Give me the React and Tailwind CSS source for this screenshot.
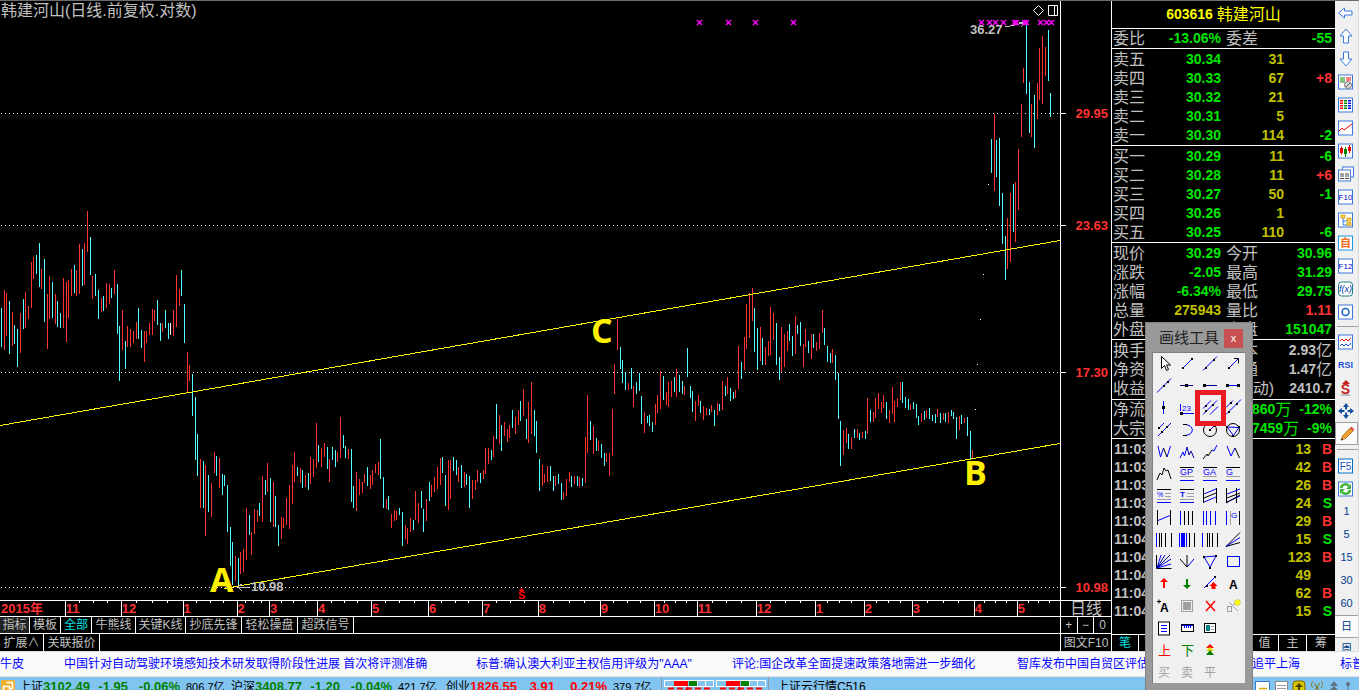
import { useState } from 'react';

const RED = '#ff3232';
const CYAN = '#54ffff';
const BLUE = '#0000ff';

// one bar per day: colour (r/c/w), x, high, low
const BARS = `c1,308,347 r4,290,350 r6,293,336 c9,301,354 r12,312,346 c14,325,344 c17,329,367 r20,313,353 c23,299,329 r25,292,328
r28,306,319 r31,262,308 r33,257,279 c36,255,274 c39,243,287 r41,269,289 c44,259,322 r47,294,349 r49,276,319 c52,282,318
r55,294,324 c57,301,327 c60,313,328 r63,278,328 r66,282,342 r68,280,318 r71,269,296 c74,265,293 r76,270,296 r79,244,294
c82,249,286 r84,243,285 r87,211,252 c90,237,275 r92,276,299 c95,274,296 c98,290,319 r101,298,312 c103,296,311 r106,283,308
r109,284,304 c111,288,298 r114,270,294 c117,284,334 c119,326,381 r122,310,350 c125,341,369 r127,326,347 r130,329,347 r133,331,343
r136,322,339 c138,308,339 c141,330,348 r144,331,362 r146,331,343 r149,323,335 r152,309,335 r154,310,321 c157,300,325 c160,323,341
r162,323,332 c165,310,328 c168,323,339 w170,323,335 r173,310,336 r176,275,327 r179,289,306 c181,270,296 c184,304,343 r187,352,392
r189,365,381 c192,374,416 c195,397,460 c197,434,476 r200,459,508 c203,461,508 r205,465,536 c208,475,512 r211,483,517 r214,452,473
c216,456,476 r219,458,488 c222,474,495 c224,475,486 c227,485,532 c230,527,566 c232,542,585 r235,556,581 c238,558,587 r240,552,574
r243,549,572 r246,508,560 c249,515,535 r251,532,555 r254,509,534 r257,510,522 c259,503,516 r262,476,522 c265,480,495 r267,463,492
c270,478,522 r273,482,527 c275,496,527 c278,525,546 r281,517,539 r283,518,528 r286,498,525 r289,485,529 r292,465,504 r294,452,482
c297,467,476 r300,468,483 c302,470,488 r305,475,487 c308,473,490 r310,457,484 r313,459,477 r316,423,468 c318,445,462 r321,448,467
r324,443,457 c327,447,469 r329,459,482 c332,447,460 c335,450,467 r337,452,462 r340,417,458 c343,435,448 c345,446,458 r348,449,459
c351,449,502 c353,486,508 r356,472,511 r359,479,495 r362,482,493 r364,474,483 c367,467,486 r370,475,489 r372,470,485 r375,464,473
r378,462,475 c380,439,479 c383,477,508 r386,499,509 c388,496,510 r391,514,528 r394,510,521 r396,511,520 c399,508,515 c402,512,546
r405,525,539 r407,528,544 r410,518,532 c413,520,530 r415,491,520 r418,503,523 c421,491,508 c423,509,532 r426,499,521 c429,482,501
r431,485,497 r434,477,492 r437,467,489 r440,458,485 c442,457,473 c445,475,506 r448,460,510 r450,460,499 c453,457,471 c456,460,475
r458,467,482 c461,465,488 r464,472,487 c466,474,485 c469,476,508 r472,480,499 r475,480,490 r477,470,482 c480,473,483 r483,470,479
r485,448,474 r488,448,464 c491,450,460 r493,436,457 c496,404,439 r499,415,444 c501,425,451 r504,422,436 r507,429,442 r509,425,438
c512,410,428 r515,417,434 r518,410,425 c520,401,421 r523,389,416 c526,419,439 r528,402,443 r531,382,434 c534,410,436 c536,421,453
c539,459,491 r542,465,486 r544,474,483 r547,466,482 c550,466,481 c553,476,491 r555,476,486 c558,474,484 c561,483,500 r563,492,499
r566,479,496 r569,472,482 c571,476,487 r574,476,484 c577,476,486 r579,477,487 c582,478,486 r585,437,483 r587,395,453 c590,421,440
r593,426,454 c596,438,451 r598,441,451 c601,444,458 c604,453,466 r606,453,462 r609,453,476 r612,409,456 r614,364,394 r617,319,350
c620,347,369 c622,360,383 c625,372,390 r628,383,390 c631,368,389 r633,386,407 c636,382,394 c639,373,391 c641,396,424 r644,412,433
c647,416,423 c649,415,426 c652,422,432 r655,404,425 r657,395,413 r660,371,409 c663,376,400 r666,392,405 r668,382,407 r671,381,397
c674,377,392 r676,369,397 c679,375,392 c682,381,394 r684,386,395 c687,348,377 c690,386,398 c692,391,412 r695,401,421 r698,395,406
c700,401,413 r703,406,420 r706,408,415 c709,409,415 r711,405,412 c714,410,426 r717,403,415 c719,404,411 r722,381,410 c725,386,396
r727,377,394 c730,388,401 c733,392,399 r735,390,398 r738,346,389 c741,362,379 r744,337,370 r746,304,349 r749,293,338 r752,288,321
c754,308,352 c757,328,370 r760,327,361 c762,338,365 r765,347,365 r768,341,356 r770,307,355 r773,313,340 c776,323,365 c779,357,380
r781,327,372 r784,334,367 r787,331,351 c789,324,341 c792,336,356 r795,316,354 c797,325,334 c800,322,346 r803,344,367 r805,329,347
c808,341,353 r811,334,359 c813,334,348 r816,342,351 r819,333,349 r822,310,333 c824,328,345 c827,346,362 c830,353,363 r832,349,363
c835,355,380 c838,373,419 c840,421,466 r843,430,455 r846,428,443 c848,434,449 r851,437,449 c854,429,438 r857,429,438 c859,433,440
r862,432,438 c865,431,439 r867,398,434 c870,410,422 r873,412,422 r875,398,418 r878,393,409 r881,402,413 r883,395,408 c886,402,419
r889,410,423 r892,387,414 r894,401,422 r897,398,407 r900,382,400 c902,382,403 c905,397,408 c908,399,410 r910,404,410 c913,402,409
c916,404,418 c918,416,425 r921,413,422 c924,411,420 r926,410,418 c929,408,419 c932,415,421 c935,414,423 r937,409,417 c940,413,423
r943,413,420 c945,413,422 r948,412,423 c951,410,416 c953,412,419 c956,417,439 r959,416,430 c961,415,424 r964,418,423 c967,417,436
c970,431,459 r972,450,459 w975,409,410 w977,364,365 w980,319,320 w983,274,275 w986,229,230 w988,184,185 c991,139,173 r994,114,191
c996,140,177 c999,138,206 c1002,193,244 c1005,236,280 r1007,218,269 r1010,193,262 c1013,184,232 r1015,182,242 r1018,149,210
r1021,104,137 r1023,68,83 c1026,24,94 c1029,82,133 r1031,104,137 c1034,95,148 r1037,83,119 r1039,48,100 r1042,36,104 r1045,47,76
c1048,30,81 c1050,93,117`.split(/\s+/);

const barPath = (kind) =>
  BARS.filter((b) => b[0] === kind)
    .map((b) => {
      const [x, hi, lo] = b.slice(1).split(',');
      return `M${x}.5 ${hi}V${lo}`;
    })
    .join('');

const PRICES = [
  { label: '29.95', y: 113 },
  { label: '23.63', y: 225 },
  { label: '17.30', y: 372 },
  { label: '10.98', y: 587 },
];

const MARKS = [699, 728, 755, 793, 981, 989, 995, 1003, 1014, 1016, 1024, 1026, 1040, 1046, 1051];

const MONTHS = [
  ['2015年', 65], ['11', 56], ['12', 62], ['1', 54], ['2', 32], ['3', 48], ['4', 54], ['5', 57], ['6', 54], ['7', 56],
  ['8', 62], ['9', 54], ['10', 43], ['11', 59], ['12', 59], ['1', 49], ['2', 48], ['3', 62], ['4', 43], ['5', 43],
];

const Chart = () => (
  <svg className="block w-full flex-1 min-h-0" viewBox="0 1 1111 599" preserveAspectRatio="xMinYMin meet">
    <g shapeRendering="crispEdges" fill="none">
      {PRICES.map((p) => (
        <g key={p.label} stroke="#fff">
          <path d={`M1 ${p.y}.5H1060`} strokeDasharray="1 3" />
          <path d={`M1061 ${p.y}.5H1066`} />
        </g>
      ))}
      <path d="M1060.5 0V600" stroke="#fff" />
      <path d={barPath('r')} stroke={RED} />
      <path d={barPath('c')} stroke={CYAN} />
      <path d={barPath('w')} stroke="#fff" />
      <path d="M0 425.5L1060 240.5M224 588.5L1060 443.5" stroke="#ff0" />
      <path d="M1005 27L1024 23M1019 22h6v1M1021 27l4 -4M238 587.5h11M242 584l-4 3l4 4" stroke="#c0c0c0" />
    </g>
    {MARKS.map((x) => (
      <path key={x} d={`M${x - 2} 20l5 5m0 -5l-5 5`} stroke="#f0f" strokeWidth="1.500" />
    ))}
    <path d="M1038.5 5.5l5 5l-5 5l-5 -5zM1048.5 5.5h9v10h-9zM1054.5 5.5v10" fill="none" stroke="#fff" />
    <g className="font-bold" fill={RED} fontSize="13">
      {PRICES.map((p) => (
        <text key={p.label} x="1108" y={p.y + 5} textAnchor="end">{p.label}</text>
      ))}
      <text x="518" y="599" fontSize="11" fill="#f00">S</text>
      <path d="M521.5 588l3 3h-6z" fill="#f00" />
    </g>
    <g className="font-bold" fill="#c0c0c0" fontSize="13">
      <text x="970" y="34">36.27</text>
      <text x="251" y="591">10.98</text>
    </g>
    <g className="font-['Open_Sans',sans-serif] font-bold" fill="#fff000" fontSize="34">
      <text x="210" y="592">A</text>
      <text x="964" y="485">B</text>
      <text x="591" y="343">C</text>
    </g>
    <text x="1" y="16" fontSize="16" fill="#c0c0c0">韩建河山(日线.前复权.对数)</text>
  </svg>
);

const TABS = [
  ['指标', 'w-[30px] bg-[#222]'], ['模板', 'w-[31px]'], ['全部', 'w-[31px]'], ['牛熊线', 'w-[44px]'],
  ['关键K线', 'w-[50px]'], ['抄底先锋', 'w-[56px]'], ['轻松操盘', 'w-[56px]'], ['超跌信号', 'w-[56px]'],
];

const ChartFooter = () => {
  const [tab, setTab] = useState('全部');
  return (
    <div className="shrink-0 text-xs text-[#c0c0c0]">
      <div className="flex h-4 border-t border-white">
        <div className="flex flex-1">
          {MONTHS.map(([m, w], i) => (
            <div
              key={i}
              className={`relative text-[13px] leading-4 font-bold text-[#ff3232] ${i ? 'border-l border-white' : 'pl-px'}`}
              style={{ flex: `${w} 1 0px` }}
            >
              {m}
              <div className="absolute inset-x-0 top-0 flex justify-evenly">
                {i > 0 && [0, 1, 2].map((t) => <span key={t} className="h-0.5 w-px bg-white" />)}
              </div>
            </div>
          ))}
        </div>
        <div className="w-[51px] border-l border-white text-center text-base leading-[15px]">日线</div>
      </div>
      <div className="flex h-[17px] border-t border-white">
        <div className="flex flex-1">
          {TABS.map(([name, cls]) => (
            <button
              key={name}
              onClick={() => setTab(name)}
              className={`shrink-0 whitespace-nowrap border-r border-white leading-4 ${cls} ${tab === name ? 'text-[#00e6e6]' : ''}`}
            >
              {name}
            </button>
          ))}
        </div>
        <div className="grid w-[51px] grid-cols-3 divide-x divide-white border-l border-white leading-4">
          <button>+</button>
          <button>−</button>
          <button>0</button>
        </div>
      </div>
      <div className="flex h-[18px] border-t border-white">
        <div className="flex flex-1">
          <button className="w-11 border-r border-white leading-4">扩展∧</button>
          <button className="w-14 border-r border-white leading-4">关联报价</button>
        </div>
        <button className="w-[51px] whitespace-nowrap border-l border-white leading-4">图文F10</button>
      </div>
    </div>
  );
};

const ASKS = [
  ['卖五', '30.34', '31', ''], ['卖四', '30.33', '67', '+8'], ['卖三', '30.32', '21', ''],
  ['卖二', '30.31', '5', ''], ['卖一', '30.30', '114', '-2'],
];
const BIDS = [
  ['买一', '30.29', '11', '-6'], ['买二', '30.28', '11', '+6'], ['买三', '30.27', '50', '-1'],
  ['买四', '30.26', '1', ''], ['买五', '30.25', '110', '-6'],
];

const G = 'text-[#00e600]';
const Y = 'text-[#c0c000]';
const R = 'text-[#ff3232]';
const W = 'text-[#c0c0c0]';

const STATS = [
  ['现价', '30.29', G, '今开', '30.96', G],
  ['涨跌', '-2.05', G, '最高', '31.29', G],
  ['涨幅', '-6.34%', G, '最低', '29.75', G],
  ['总量', '275943', Y, '量比', '1.11', R],
  ['外盘', '', R, '内盘', '151047', G],
];
const BASICS = [
  ['换手', '', W, '股本', '2.93亿', W],
  ['净资', '', W, '流通', '1.47亿', W],
  ['收益', '', W, 'PE(动)', '2410.7', W],
];
const FLOWS = [
  ['净流', '-860万', '-12%'],
  ['大宗', '-7459万', '-9%'],
];
const TICKS = [
  ['11:03', '13', 'B'], ['11:03', '42', 'B'], ['11:03', '26', 'B'], ['11:03', '24', 'S'], ['11:03', '29', 'B'],
  ['11:04', '15', 'S'], ['11:04', '123', 'B'], ['11:04', '49', ''], ['11:04', '62', 'B'], ['11:04', '15', 'S'],
];

const Num = ({ children }) => {
  const m = /^(.*?)([亿万]?)$/.exec(children);
  return (
    <>
      {m[1]}
      {m[2] && <span className="align-middle text-base leading-4 font-normal">{m[2]}</span>}
    </>
  );
};

const OrderTable = ({ rows }) => (
  <table className="mt-px w-full table-fixed border-b border-white text-sm font-bold">
    <tbody>
      {rows.map(([name, price, qty, diff]) => (
        <tr key={name} className="h-[19px] text-right leading-[19px]">
          <th className="w-[34px] pl-px text-left text-base leading-[19px] font-normal">{name}</th>
          <td className={`w-[75px] ${G}`}>{price}</td>
          <td className={`w-[63px] ${Y}`}>{qty}</td>
          <td className={`pr-[3px] ${diff[0] === '+' ? R : G}`}>{diff}</td>
        </tr>
      ))}
    </tbody>
  </table>
);

const StatTable = ({ rows }) => (
  <table className="mt-px w-full table-fixed text-sm font-bold">
    <tbody>
      {rows.map(([a, av, ac, b, bv, bc]) => (
        <tr key={a} className="h-[19px] text-right leading-[19px]">
          <th className="w-[34px] pl-px text-left text-base leading-[19px] font-normal">{a}</th>
          <td className={`w-[75px] ${ac}`}>{av}</td>
          <th className="w-[50px] whitespace-nowrap pl-[5px] text-left text-base leading-[19px] font-normal">{b}</th>
          <td className={`pr-[3px] ${bc}`}><Num>{bv}</Num></td>
        </tr>
      ))}
    </tbody>
  </table>
);

const QuotePanel = () => (
  <section className="flex w-56 shrink-0 flex-col border-l border-white text-[#c0c0c0]">
    <h1 className="h-7 border-b border-white text-center text-sm leading-[27px] font-bold text-[#ff0]">
      603616 <span className="align-middle text-base leading-4 font-normal">韩建河山</span>
    </h1>
    <div className="flex h-5 items-center border-b border-white pr-[3px] pl-px text-sm leading-[19px] font-bold">
      <span className="w-8 text-base font-normal">委比</span>
      <span className={`w-[76px] text-right ${G}`}>-13.06%</span>
      <span className="ml-[5px] text-base font-normal">委差</span>
      <span className={`flex-1 text-right ${G}`}>-55</span>
    </div>
    <OrderTable rows={ASKS} />
    <OrderTable rows={BIDS} />
    <div className="border-b border-white">
      <StatTable rows={STATS} />
    </div>
    <div className="border-b border-white pb-px">
      <StatTable rows={BASICS} />
    </div>
    <table className="w-full table-fixed border-b border-white text-sm font-bold">
      <tbody>
        {FLOWS.map(([name, sum, pct]) => (
          <tr key={name} className={`h-[19px] text-right leading-[19px] ${G}`}>
            <th className="w-[60px] pl-px text-left text-base leading-[19px] font-normal text-[#c0c0c0]">{name}</th>
            <td className="pr-[3px]">
              <Num>{sum}</Num>
              <span className="ml-2">{pct}</span>
            </td>
          </tr>
        ))}
      </tbody>
    </table>
    <table className="mt-px w-full table-fixed text-sm font-bold">
      <tbody>
        {TICKS.map(([time, vol, side], i) => (
          <tr key={i} className="h-[18px] leading-[18px]">
            <td className="w-[60px] pl-[2px]">{time}</td>
            <td className={`text-right ${Y}`}>{vol}</td>
            <td className={`w-[24px] pr-[3px] text-right ${side === 'B' ? R : G}`}>{side}</td>
          </tr>
        ))}
      </tbody>
    </table>
    <div className="mt-auto flex h-[17px] divide-x divide-white border-t border-white text-xs leading-4">
      {['笔', '价', '分', '盘', '势', '值', '主', '筹'].map((t, i) => (
        <button key={t} className={i ? 'w-7' : 'flex-1 text-[#00e6e6]'}>{t}</button>
      ))}
    </div>
  </section>
);

const Frame = ({ c = '#3c78dc', children }) => (
  <>
    <rect x=".5" y="1" width="14" height="14" fill="#fff" stroke={c} />
    {children}
  </>
);

const Label = ({ children, ...p }) => (
  <text x="7.5" y="12" textAnchor="middle" fontSize="10" fill="#1450c8" stroke="none" {...p}>{children}</text>
);

const SIDE_TOP = [
  ['后退', <path d="M.5 8l6-5v3h7.5v4h-7.5v3z" fill="#fff" stroke="#3c78dc" />],
  ['上翻', <path d="M8 1l6 7h-3.500v7h-5v-7h-3.500z" fill="#fff" stroke="#3c78dc" />],
  ['下翻', <path d="M8 15l6-7h-3.500v-7h-5v7h-3.500z" fill="#fff" stroke="#3c78dc" />],
  ['报价', <Frame><path d="M2 4h5M2 6h5M2 8h5" stroke="#080" /><path d="M8 4h5M8 6h5" stroke="#f00" /><circle cx="10" cy="11" r="3.500" fill="#ddd" stroke="#777" /><path d="M8 13l4-4" stroke="#555" /></Frame>],
  ['多栏', <Frame><g strokeDasharray="1.500 1"><path d="M3.500 3v10" stroke="#f00" strokeWidth="3" /><path d="M7.500 3v10" stroke="#080" strokeWidth="3" /><path d="M11.500 3v10" stroke="#00f" strokeWidth="3" /></g></Frame>],
  ['分时', <Frame><path d="M1 11l3-3 2 2 4-3 4-3" fill="none" stroke="#e00" /></Frame>],
  ['K线', <Frame><path d="M3.500 3.500v8M11.500 2v8" stroke="#e00" /><path d="M7.500 4v10" stroke="#080" /><path d="M2 5h3v5h-3zM10 4h3v4h-3z" fill="#e00" /><path d="M6 6h3v5h-3z" fill="#080" /></Frame>],
  ['窗口', <><rect x="4.500" y="1" width="11" height="10" fill="#fff" stroke="#3c78dc" /><rect x=".5" y="4" width="12" height="11" fill="#fff" stroke="#3c78dc" /><path d="M2 8h4M7 8h4M2 10h4M7 10h4M2 12.500h4M7 12.500h4" stroke="#444" /></>],
  ['资料', <Frame><Label fontSize="8" y="11" fill="#0000c8">F10</Label></Frame>],
  ['板块', <Frame><path d="M5 5v8h4M5 9h4" fill="none" stroke="#3c78dc" /><path d="M3 3h4v3h-4zM9 6h4v3h-4zM9 10.500h4v3h-4z" fill="#ffd24a" stroke="#c89000" strokeWidth=".7" /></Frame>],
  ['自选', <Frame c="#1e9ae0"><Label fill="#f06a20" fontSize="11" fontWeight="bold">自</Label></Frame>],
  ['分笔', <Frame><Label fontSize="8" y="11" fill="#0000c8">F12</Label></Frame>],
  ['公式', <><rect x=".5" y="1" width="14" height="14" rx="3" fill="#fff" stroke="#1a7f8a" /><Label fontStyle="italic" fontSize="9" y="11" fill="#003c9c">f(x)</Label></>],
  ['周期', <Frame><circle cx="7.500" cy="8" r="3.500" fill="none" stroke="#1464c8" strokeWidth="1.500" /></Frame>],
];

const SIDE_MID = [
  ['叠加', <Frame><path d="M2 7l2-2 2 2 2-2 2 2 3-3" fill="none" stroke="#e00" /><path d="M2 12l2-2 2 2 2-2 2 2 3-3" fill="none" stroke="#1450c8" /></Frame>],
  ['RSI', <Label fontSize="9" fontWeight="bold" fill="#2850d8" y="11">RSI</Label>],
  ['复权', <><path d="M8 0l4 4h-8z" fill="#c81e1e" /><Label fontSize="14" fontWeight="bold" fill="#c81e1e" y="14">S</Label><path d="M3 15h9" stroke="#888" /></>],
  ['移动', <><path d="M8 1v14M1 8h14" stroke="#1450a0" strokeWidth="2" /><path d="M8 0l3 4h-6zM8 16l3-4h-6zM0 8l4-3v6zM16 8l-4-3v6z" fill="#1450a0" /><rect x="6.500" y="6.500" width="3" height="3" fill="#fff" /></>],
  ['画线', <><path d="M2 14l1.500-4 7.500-8 3 3-7.500 7.500z" fill="#f0a030" stroke="#9a5a10" strokeWidth=".7" /><path d="M11 2l1.500-1.500 3 3-1.500 1.500z" fill="#e05050" /><path d="M2 14.500l.7-2 1.600 1.300z" fill="#222" /></>],
];

const SIDE_END = [
  ['F5', <Frame c="#0070c8"><Label>F5</Label></Frame>],
  ['刷新', <Frame><path d="M3 7a4.500 4.500 0 0 1 8-2M12 9a4.500 4.500 0 0 1-8 2" fill="none" stroke="#3cb43c" strokeWidth="2.500" /><path d="M13 3v5h-5zM2 13v-5h5z" fill="#3cb43c" /></Frame>],
];

const SideButton = ({ name, on, children }) => (
  <button aria-label={name} className={`flex h-[23px] w-full items-center pl-[3px] ${on ? 'border border-[#a0a0a0] bg-[#fafafa] pl-0.5' : ''}`}>
    <svg width="16" height="16" viewBox="0 0 16 16">{children}</svg>
  </button>
);

const SideBar = () => (
  <nav className="h-full w-6 shrink-0 overflow-hidden border-r border-[#d8d8d8] bg-[#f0f0f0]">
    {SIDE_TOP.map(([n, icon]) => <SideButton key={n} name={n}>{icon}</SideButton>)}
    <div className="my-[3px] ml-0.5 h-px bg-[#a0a0a0]" />
    {SIDE_MID.map(([n, icon]) => <SideButton key={n} name={n} on={n === '画线'}>{icon}</SideButton>)}
    <div className="my-1 ml-0.5 h-px bg-[#a0a0a0]" />
    {SIDE_END.map(([n, icon]) => <SideButton key={n} name={n}>{icon}</SideButton>)}
    {['1', '5', '15', '30', '60', '日', '周'].map((t) => (
      <button
        key={t}
        className={`block h-[23px] w-full text-center text-[11px] text-[#003c8c] ${t === '日' ? 'border-y border-[#a0a0a0] bg-[#fafafa]' : ''}`}
      >
        {t}
      </button>
    ))}
  </nav>
);

const L = ({ d, c = BLUE, w = 1 }) => <path d={d} stroke={c} strokeWidth={w} fill="none" />;
const Dots = ({ at }) => at.map(([x, y]) => <rect key={`${x}-${y}`} x={x - 1} y={y - 1} width="2" height="2" fill="#000" />);
const T = ({ children, x = 4, y = 12, c = BLUE, s = 9, w = 'normal' }) => (
  <text x={x} y={y} fill={c} fontSize={s} fontWeight={w}>{children}</text>
);
const K = '#000';
const GRAY = '#a0a0a0';

// row by row, four icons per row
const TOOLS = [
  <path d="M8.500 3.500v12l3-3 2 5 2-1-2-4.500h4z" fill="#fff" stroke={K} />,
  <><L d="M7 15l9-9" /><Dots at={[[7, 15], [16, 6]]} /></>,
  <><L d="M4 17.500l14-14" /><Dots at={[[7, 15], [15, 7]]} /></>,
  <><L d="M6 16l10-10" /><L d="M12 5.500h4.500v5" c={K} /><Dots at={[[7, 15]]} /></>,

  <><L d="M4 17.500l14-14" /><Dots at={[[11, 11], [15, 7]]} /></>,
  <><L d="M4 10.500h13" c="#000090" /><rect x="9" y="9" width="3" height="3" /></>,
  <><L d="M5 10.500h13" c="#000090" /><rect x="4" y="9" width="3" height="3" /></>,
  <><L d="M5 10.500h12" /><rect x="4" y="9" width="3" height="3" /><rect x="15" y="9" width="3" height="3" /></>,

  <><L d="M10.500 4v13" /><rect x="9" y="9" width="3" height="3" /></>,
  <><L d="M4.500 7v7" /><T x={6} y={14} s={8}>23</T><L d="M5 16.500h13" /><rect x="4" y="15" width="3" height="3" /></>,
  <><L d="M4 11.500l8-8M4 17.500l14-14M11 17.500l8-8" /><Dots at={[[7, 14], [14, 8], [7, 9]]} /></>,
  <><L d="M4 10.500l7-7M4 17.500l15-15" /><Dots at={[[7, 15], [15, 7], [9, 6]]} /></>,

  <><L d="M5 10l6-6M5 17l13-13" /><Dots at={[[6, 9], [9, 13], [14, 8]]} /></>,
  <><L d="M8 5.500c11 0 11 11 0 11" /><L d="M7 5.500h4M7 16.500h4" c={K} /></>,
  <><circle cx="11" cy="11" r="6.500" fill="none" stroke={K} /><L d="M11 11l4-4" /><Dots at={[[11, 11], [15, 7]]} /></>,
  <><circle cx="11" cy="11" r="6.500" fill="none" stroke={K} /><L d="M5 8l12 0.500-5.500 8z" /><Dots at={[[5, 8], [17, 8], [11, 17]]} /></>,

  <><L d="M5 5l2.500 11 3-9M14 16l3.500-11" /><L d="M10.500 7l3.500 9" c={K} /></>,
  <><L d="M4 17l3-6 1.500 4 2.500-9" /><L d="M11 6l2 8 2-4 3 7" c="#000090" /></>,
  <><L d="M4 18l4-5 1 2 4-6" c={K} /><L d="M13 9l2 1 3-6" /></>,
  <><L d="M5 5l4 10 4-8" /><L d="M13 7l4.500 10" c={K} /></>,

  <L d="M4 17l3-7 2 2 2-7 2 3 2-1 3 9" c={K} />,
  <><L d="M4 4.500h14" c={K} /><T>GP</T><L d="M4 13.500h14" c={GRAY} /><L d="M4 17.500h14" /></>,
  <><L d="M4 4.500h14" c={K} /><T>GA</T><L d="M4 13.500h14" c={GRAY} /><L d="M4 17.500h14" /></>,
  <><L d="M4 4.500h14" c={K} /><T>G</T><L d="M4 13.500h14" c={GRAY} /><L d="M4 17.500h14" /></>,

  <><L d="M4 4.500h14" c={K} /><T s={7}>%</T><L d="M12 8.500h6M12 11.500h6" c={GRAY} /><L d="M4 14.500h14" c={GRAY} /><L d="M4 17.500h14" /></>,
  <><L d="M4 4.500h14" c={K} /><T s={8} w="bold">T</T><L d="M11 8.500h7M11 11.500h7" c={GRAY} /><L d="M4 14.500h14" c={GRAY} /><L d="M4 17.500h14" /></>,
  <><L d="M4.500 3v15M17.500 3v15" c={K} /><L d="M5 9l12-5M5 17l12-5" /><L d="M5 13l12-5" c={K} /></>,
  <><L d="M4.500 3v15M14.500 3v15" c={K} /><L d="M5 9l13-5M5 17l13-6" /><L d="M5 13l13-5M4 18l14-8" c={K} /></>,

  <><L d="M4.500 3v15M17.500 3v15" c={K} /><L d="M5 13.500l12-5" /></>,
  <><L d="M4.500 4v14" /><L d="M8.500 4v14M12.500 4v14M16.500 4v14" c={K} /></>,
  <L d="M4.500 4v14M7.500 4v14M11.500 4v14M16.500 4v14" />,
  <><L d="M4.500 4v14" /><L d="M8.500 4v14" c={GRAY} /><T x={9} y={11} s={8}>G</T><L d="M17.500 4v14" c={K} /></>,

  <><L d="M3.500 4v14" /><L d="M6.500 4v14M8.500 4v14M12.500 4v14M18.500 4v14" c={K} /></>,
  <><L d="M3.500 4v14M10.500 4v14" /><L d="M7 4v14" w={4} /><L d="M13.500 4v14M18.500 4v14" c={K} /></>,
  <><L d="M3.500 4v14" /><L d="M8.500 4v14M10.500 4v14M13.500 4v14M18.500 4v14" c={K} /></>,
  <><L d="M4 17.500l14-14M4 17.500l14-4" c={K} /><L d="M4 17.500l14-9" /></>,

  <><L d="M3.500 4v13.500h15" c={K} /><L d="M4 17l4-13M4 17l14-9M4 17l14-4" /><L d="M4 17l13-13M4 17l8-13" c="#000090" /></>,
  <><L d="M4 8l7 8 0-12M11 16l2-2" c={K} /><L d="M12 15l6-7" /></>,
  <><L d="M5 6l12-1-6 11z" /><Dots at={[[5, 6], [17, 5], [11, 17]]} /></>,
  <rect x="5.500" y="5.500" width="12" height="10" fill="none" stroke={BLUE} />,

  <path d="M11 5l4 4h-3v6h-2v-6h-3z" fill="#f00" />,
  <path d="M11 16l4-4h-3v-6h-2v6h-3z" fill="#008000" />,
  <><L d="M5 15l11-11" /><Dots at={[[8, 13], [16, 4]]} /><path d="M14.500 9l4 4h-2v3h-4v-3h-2z" fill="#f00" /></>,
  <T x={7} y={16} c={K} s={12} w="bold">A</T>,

  <><L d="M4 6.500h4M6 4.500v4" c={K} /><T x={7} y={17} c={K} s={12} w="bold">A</T></>,
  <><rect x="5.500" y="5.500" width="11" height="11" fill="none" stroke={GRAY} /><rect x="7" y="7" width="8" height="8" fill={GRAY} /></>,
  <L d="M7 6l9 10M16 6l-9 10" c="#f00" w={1.5} />,
  <><rect x="5.500" y="11.500" width="4" height="5" fill="none" stroke={GRAY} /><L d="M7 7l9 9M10 11l4-4" c={GRAY} /><circle cx="15.500" cy="7.500" r="3" fill="#ff0" stroke={GRAY} strokeWidth=".5" /></>,

  <><rect x="5.500" y="5" width="11" height="13" fill="#fff" stroke={K} /><L d="M8 8.500h6M8 11.500h6M8 14.500h6" /></>,
  <><rect x="5.500" y="7.500" width="12" height="7" fill="#fff" stroke={K} /><L d="M6 8.500h11M8.500 8v3M10.500 8v3M12.500 8v3M14.500 8v3" /></>,
  <><rect x="5.500" y="6.500" width="11" height="9" fill="#fff" stroke={K} /><rect x="7" y="8" width="4" height="6" fill="#008080" /><L d="M12 9.500h3M12 12.500h3" c={GRAY} /></>,
  null,

  <T x={5} y={16} s={13} c="#f00">上</T>,
  <T x={5} y={16} s={13} c="#008000">下</T>,
  <><path d="M11 5l4 4h-8z" fill="#f00" /><path d="M11 8l4 4h-8z" fill="#e6dc00" /><path d="M11 11l4 5h-8z" fill="#008000" /></>,
  null,

  <T x={5} y={16} s={12} c={GRAY}>买</T>,
  <T x={5} y={16} s={12} c={GRAY}>卖</T>,
  <T x={5} y={16} s={12} c={GRAY}>平</T>,
  null,
];

const DrawTools = () => {
  const [active, setActive] = useState(10);
  return (
    <div className="absolute top-[322px] right-[106px] flex h-96 w-[108px] flex-col border border-[#808080] bg-[#999] px-[6px] pt-[5px]">
      <div className="flex items-center justify-between pr-[3px] pl-[7px]">
        <h2 className="text-[15px] leading-5 font-normal text-[#222]">画线工具</h2>
        <button aria-label="关闭" className="h-[19px] w-[19px] bg-[#c75050] text-[11px] leading-4 text-white">x</button>
      </div>
      <div className="mt-[4px] grid w-[93px] grid-cols-4 border-t border-l border-[#808080] bg-[#f0f0f0]">
        {TOOLS.map((icon, i) => (
          <button key={i} onClick={() => setActive(i)} className="relative flex h-[22px] items-center justify-center">
            <svg width="23" height="22" viewBox="0 0 23 22" className="shrink-0">{icon}</svg>
            {active === i && <span className="absolute -inset-x-1 -inset-y-[7px] z-10 border-[5px] border-[#ed1c24]" />}
          </button>
        ))}
      </div>
    </div>
  );
};

const NEWS = [
  ['牛皮', 'w-16'],
  ['中国针对自动驾驶环境感知技术研发取得阶段性进展 首次将评测准确', 'w-[412px]'],
  ['标普:确认澳大利亚主权信用评级为"AAA"', 'w-64'],
  ['评论:国企改革全面提速政策落地需进一步细化', 'w-[285px]'],
  ['智库发布中国自贸区评估', 'w-[235px]'],
  ['追平上海', 'w-[88px]'],
  ['标普', 'w-16'],
];

const INDEXES = [
  ['上证', '3102.49', '-1.95', '-0.06%', '806.7亿', 'text-[#008000]'],
  ['沪深', '3408.77', '-1.20', '-0.04%', '421.7亿', 'text-[#008000]'],
  ['创业', '1826.55', '3.91', '0.21%', '379.7亿', 'text-[#f00]'],
];

const Meter = () => (
  <svg width="50" height="14" viewBox="0 0 50 14">
    <rect x=".5" y="3.500" width="49" height="6" fill="none" stroke="#fff" />
    <path d="M41.500 3v6M33.500 3v6" stroke="#fff" />
    <path d="M10 4h14v5h-14z" fill="#f00" />
    <path d="M25 4h8v5h-8z" fill="#008000" />
    <path d="M4 11.500h43" stroke="#f00" strokeWidth="2" strokeDasharray="6 3" />
    <path d="M23 9l2 4h-4z" fill="#f00" />
  </svg>
);

const StatusBar = () => (
  <footer className="h-[13px] shrink-0 overflow-hidden bg-[#82c4f0] text-xs text-black">
    <div className="flex h-5 items-center whitespace-nowrap">
      <svg width="14" height="14" viewBox="0 0 14 14" className="ml-px">
        <rect width="14" height="14" rx="1" fill="#f0b030" />
        <path d="M2.500 6.500h6v6h-6zM5.500 2.500h6v6h-3" fill="none" stroke="#fff" strokeWidth="1.500" />
      </svg>
      {INDEXES.map(([name, val, chg, pct, vol, color], i) => (
        <div key={name} className={`flex items-center ${i ? 'w-[215px]' : 'ml-1 w-[212px]'}`}>
          <span className="w-6 shrink-0">{name}</span>
          <span className={`w-[46px] text-[13px] font-bold ${color}`}>{val}</span>
          <span className={`w-[39px] text-right text-[13px] font-bold ${color}`}>{chg}</span>
          <span className={`w-[52px] text-right text-[13px] font-bold ${color}`}>{pct}</span>
          <span className="ml-1.5 text-[11px]">{vol}</span>
        </div>
      ))}
      <div className="flex h-full items-start gap-0.5 border-x border-[#8c9aa5] px-0.5">
        <Meter />
        <Meter />
      </div>
      <span className="ml-2">上证云行情C516</span>
      <svg width="103" height="16" viewBox="0 0 103 16" className="mr-px ml-auto">
        <rect x=".5" y="2.500" width="14" height="14" fill="#fff" stroke="#3c78c8" />
        <path d="M4 9.500h8M4 12.500h8" stroke="#d8a800" strokeWidth="1.500" />
        <rect x="20.500" y="2.500" width="12" height="14" fill="#fff" stroke="#888" />
        <path d="M22 6.500h9M22 9.500h9M22 12.500h9" stroke="#999" />
        <rect x="38" y="2" width="12" height="16" rx="3" fill="#d8c800" stroke="#806000" />
        <path d="M44 4l4 4h-3v6h-2v-6h-3z" fill="#4a4000" />
        <path d="M62 6v10M58 16l4-9 4 9M58 2c-2 2-2 5 0 7M66 2c2 2 2 5 0 7M60 4v3M64 4v3" fill="none" stroke="#807820" />
        <path d="M79 2l4 5h-8zM79 7l5 5h-10zM78 11h2v5h-2z" fill="#607080" />
        <circle cx="93" cy="5" r="2" fill="#607080" />
        <path d="M93 5v11" stroke="#607080" />
      </svg>
    </div>
  </footer>
);

const App = () => (
  <div className="relative flex h-screen flex-col overflow-hidden bg-black font-['Liberation_Sans','Noto_Sans_CJK_SC',sans-serif]">
    <main className="flex min-h-0 flex-1 border-t border-[#6b6b6b]">
      <div className="flex min-w-0 flex-1 flex-col">
        <Chart />
        <ChartFooter />
      </div>
      <QuotePanel />
      <SideBar />
    </main>
    <div className="flex h-[26px] shrink-0 items-center overflow-hidden border-y border-[#e0e0e0] bg-[#fafafa] text-xs whitespace-nowrap text-[#00f]">
      {NEWS.map(([text, width]) => (
        <a key={text} href="#" className={`shrink-0 ${width}`}>{text}</a>
      ))}
    </div>
    <StatusBar />
    <DrawTools />
  </div>
);

export default App;
